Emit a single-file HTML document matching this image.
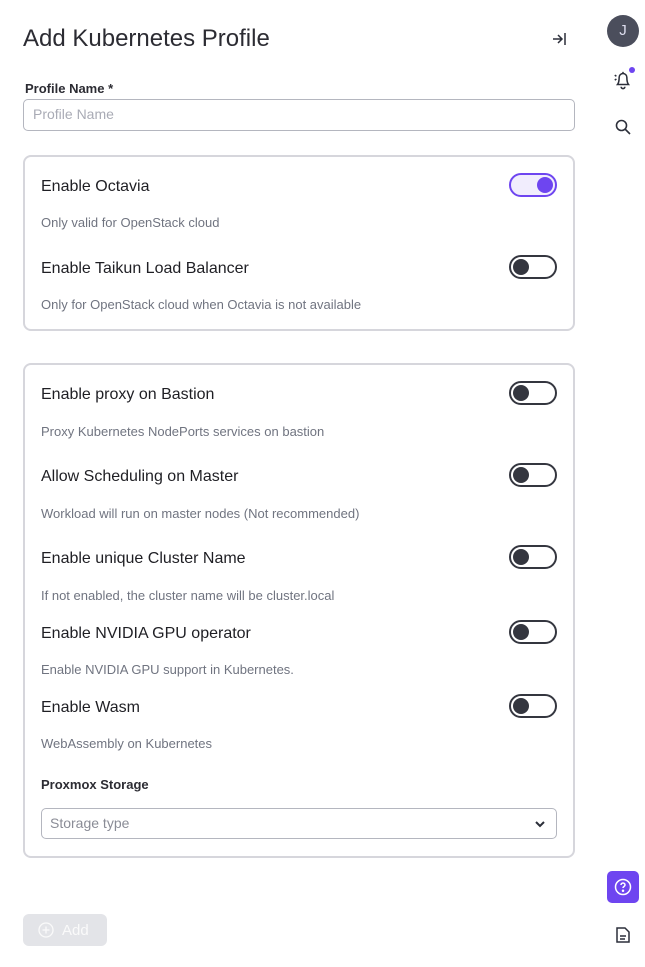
<!DOCTYPE html>
<html><head><style>
*{box-sizing:border-box;margin:0;padding:0}
body{width:645px;height:967px;background:#fff;font-family:"Liberation Sans",sans-serif;color:#222;position:relative;overflow:hidden}
.a{position:absolute}
.t{font-size:16px;color:#1f1f24;left:41px;line-height:20px}
.d{font-size:13px;color:#707480;left:41px;line-height:16px}
.card{position:absolute;left:23px;width:552px;border:2px solid #d6d6dc;border-radius:8px}
.tg{position:absolute;left:509px;width:48px;height:24px;border:2px solid #34363f;border-radius:12px}
.tg::after{content:"";position:absolute;left:2px;top:2px;width:16px;height:16px;border-radius:50%;background:#34363f}
.tg.on{border-color:#6e45f0;background:#f1edfd}
.tg.on::after{left:26px;background:#6e45f0}
</style></head><body>
<div class="a" style="left:23px;top:24px;font-size:24px;color:#2c2c33;line-height:30px">Add Kubernetes Profile</div>
<svg class="a" style="left:551px;top:31px" width="16" height="16" viewBox="0 0 16 16" fill="none" stroke="#2c2f3a" stroke-width="1.5"><path d="M2 8h9M7 4l4 4-4 4M14 2v12"/></svg>
<div class="a" style="left:607px;top:15px;width:32px;height:32px;border-radius:50%;background:#4b4e5c;color:#dde;text-align:center;line-height:32px;font-size:15px">J</div>
<svg class="a" style="left:612px;top:68px" width="22" height="22" viewBox="0 0 20 20" fill="none" stroke="#2c2f3a" stroke-width="1.4"><path d="M5 15c1.5-2 1.5-4 1.5-6.5a3.5 3.5 0 017 0c0 2.5 0 4.5 1.5 6.5zM8.3 17a1.7 1.7 0 003.4 0M2.5 6.5l1.5 1M2.5 11l1.5-1M10 3.5v1.5"/></svg>
<div class="a" style="left:629px;top:67px;width:6px;height:6px;border-radius:50%;background:#6e45f0"></div>
<svg class="a" style="left:614px;top:118px" width="18" height="18" viewBox="0 0 18 18" fill="none" stroke="#2c2f3a" stroke-width="1.6"><circle cx="7.5" cy="7.5" r="5"/><path d="M11 11l5 5"/></svg>
<div class="a" style="left:25px;top:81px;font-size:13px;font-weight:bold;color:#2c2c33">Profile Name *</div>
<div class="a" style="left:23px;top:99px;width:552px;height:32px;border:1.5px solid #b4b6bf;border-radius:5px;padding-left:9px;line-height:29px;font-size:14px;color:#a9abb5">Profile Name</div>
<div class="card" style="top:155px;height:176px"></div>
<div class="a t" style="top:177px">Enable Octavia</div><div class="tg on" style="top:173px"></div>
<div class="a d" style="top:215px">Only valid for OpenStack cloud</div>
<div class="a t" style="top:259px">Enable Taikun Load Balancer</div><div class="tg" style="top:255px"></div>
<div class="a d" style="top:297px">Only for OpenStack cloud when Octavia is not available</div>
<div class="card" style="top:363px;height:495px"></div>
<div class="a t" style="top:385px">Enable proxy on Bastion</div><div class="tg" style="top:381px"></div>
<div class="a d" style="top:424px">Proxy Kubernetes NodePorts services on bastion</div>
<div class="a t" style="top:467px">Allow Scheduling on Master</div><div class="tg" style="top:463px"></div>
<div class="a d" style="top:506px">Workload will run on master nodes (Not recommended)</div>
<div class="a t" style="top:549px">Enable unique Cluster Name</div><div class="tg" style="top:545px"></div>
<div class="a d" style="top:588px">If not enabled, the cluster name will be cluster.local</div>
<div class="a t" style="top:624px">Enable NVIDIA GPU operator</div><div class="tg" style="top:620px"></div>
<div class="a d" style="top:662px">Enable NVIDIA GPU support in Kubernetes.</div>
<div class="a t" style="top:698px">Enable Wasm</div><div class="tg" style="top:694px"></div>
<div class="a d" style="top:736px">WebAssembly on Kubernetes</div>
<div class="a" style="left:41px;top:777px;font-size:13px;font-weight:bold;color:#2c2c33">Proxmox Storage</div>
<div class="a" style="left:41px;top:808px;width:516px;height:31px;border:1.5px solid #b4b6bf;border-radius:5px;padding-left:8px;line-height:29px;font-size:14px;color:#8a8c96">Storage type</div>
<svg class="a" style="left:533px;top:817px" width="14" height="14" viewBox="0 0 14 14" fill="none" stroke="#2c2f3a" stroke-width="2"><path d="M3 5l4 4 4-4"/></svg>
<div class="a" style="left:23px;top:914px;width:84px;height:32px;border-radius:6px;background:#e3e4e8;color:#fafafa;font-size:15px;line-height:33px;padding-left:39px">Add</div>
<svg class="a" style="left:38px;top:922px" width="16" height="16" viewBox="0 0 16 16" fill="none" stroke="#fafafa" stroke-width="1.3"><circle cx="8" cy="8" r="7"/><path d="M8 4.5v7M4.5 8h7"/></svg>
<div class="a" style="left:607px;top:871px;width:32px;height:32px;border-radius:5px;background:#6e45f0"></div>
<svg class="a" style="left:614px;top:878px" width="18" height="18" viewBox="0 0 18 18" fill="none" stroke="#fff" stroke-width="1.5"><circle cx="9" cy="9" r="7.5"/><path d="M7 7a2 2 0 114 0c0 1.5-2 1.5-2 3"/><circle cx="9" cy="12.8" r=".5" fill="#fff"/></svg>
<svg class="a" style="left:615px;top:926px" width="16" height="18" viewBox="0 0 16 18" fill="none" stroke="#2c2f3a" stroke-width="1.5"><path d="M2 2h8l4 4v10H2zM5 10h6M5 13h5"/></svg>
</body></html>
